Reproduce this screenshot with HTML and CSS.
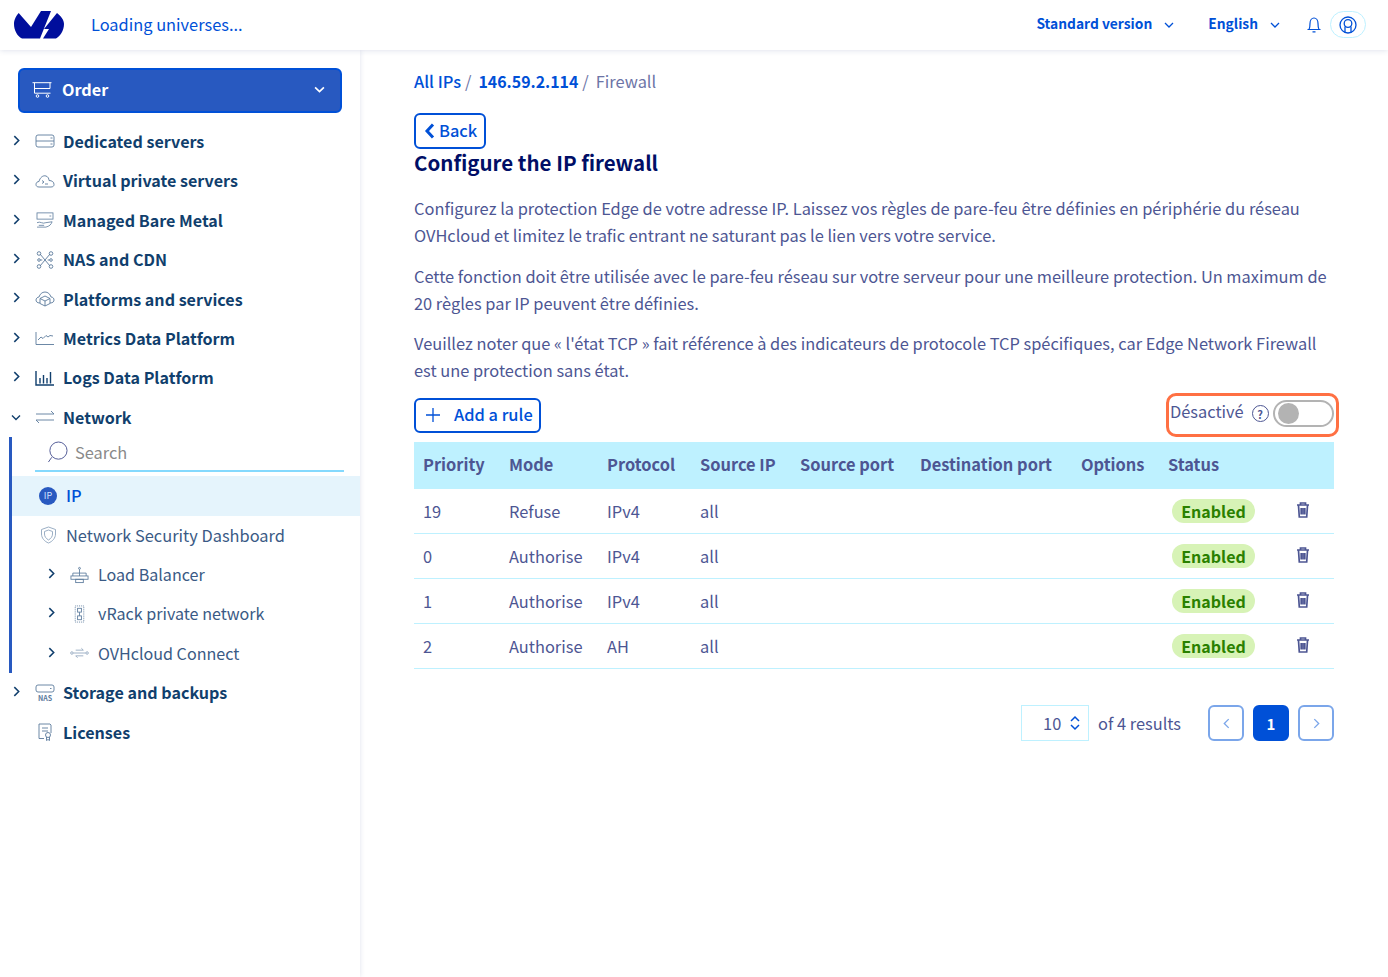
FILE: index.html
```html
<!DOCTYPE html>
<html>
<head>
    <title>Firewall</title>
    <link rel="stylesheet" href="styles.css">
</head>
<body>
    <header class="topbar">
        <svg class="logo" viewBox="0 0 50 28"><path d="M4.700 2C1 6 0 10 0 13 0 19 3 25 8 27.500H26L37 0H27L17 16Z M29 27.500L35 18H30L43 2C47 5 50 9 50 13 50 20 46 25 42 27.500Z"/></svg>
        <span class="loading">Loading universes...</span>
        <div class="topnav">
            <span class="topnav-item">Standard version <svg class="chev-s" viewBox="0 0 10 6"><path d="M1 1l4 4 4-4"/></svg></span>
            <span class="topnav-item lang">English <svg class="chev-s" viewBox="0 0 10 6"><path d="M1 1l4 4 4-4"/></svg></span>
            <svg class="bell" viewBox="0 0 14 16"><path d="M.5 12.500h13M2 12.500c1-1.500 1-3 1-6 0-3 1.700-5.500 4-5.500s4 2.500 4 5.500c0 3 0 4.500 1 6M5.500 14.800h3"/></svg>
            <span class="user"><svg viewBox="0 0 18 18"><circle cx="9" cy="9" r="8"/><circle cx="9" cy="7.500" r="3.800"/><path d="M6 10.500v6M12 10.500v6"/></svg></span>
        </div>
    </header>

    <div class="page">
        <aside class="sidebar">
            <div class="order">
                <svg class="cart" viewBox="0 0 20 16"><path d="M.5.700h19M2.500.700v10.500h16M2.500 6.500h15.500M18 .700v5.800"/><circle cx="5.500" cy="14" r="1.300"/><circle cx="15.500" cy="14" r="1.300"/></svg>
                <span>Order</span>
                <svg class="order-chev" viewBox="0 0 10 6"><path d="M1 1l4 4 4-4"/></svg>
            </div>
            <ul class="menu">
                <li class="row"><svg class="arrow" viewBox="0 0 6 10"><path d="M1 1l4 4-4 4"/></svg><svg class="ico" viewBox="0 0 20 16"><rect x="1" y="2" width="18" height="12" rx="2"/><path d="M1 8h18M15.500 5h2M15.500 11h2"/></svg>Dedicated servers</li>
                <li class="row"><svg class="arrow" viewBox="0 0 6 10"><path d="M1 1l4 4-4 4"/></svg><svg class="ico" viewBox="0 0 20 16"><path d="M4 14C2 14 1 13 1 11.500 1 9.500 2.500 8.500 4 8.500 5 4.500 8 2 11 3c2 .7 3 2.500 3 4.500 3 0 5 1.500 5 4 0 1.500-1 2.500-3 2.500z"/><path d="M7 7.500l2 1.500-2 1.500M10 11h3"/></svg>Virtual private servers</li>
                <li class="row"><svg class="arrow" viewBox="0 0 6 10"><path d="M1 1l4 4-4 4"/></svg><svg class="ico" viewBox="0 0 20 18"><rect x="1" y="1" width="18" height="7"/><path d="M15 4.500h2M1 12c4-2 6 2 10 0l7-1c-1 3-3 5-7 6H1M3 15h6"/></svg>Managed Bare Metal</li>
                <li class="row"><svg class="arrow" viewBox="0 0 6 10"><path d="M1 1l4 4-4 4"/></svg><svg class="ico ico-tall" viewBox="0 0 18 18"><path d="M4 3l10 12M14 3L4 15"/><circle cx="3" cy="2.500" r="1.800"/><circle cx="15" cy="2.500" r="1.800"/><circle cx="3" cy="15.500" r="1.800"/><circle cx="15" cy="15.500" r="1.800"/><circle cx="3" cy="9" r="1.300"/><circle cx="15" cy="9" r="1.300"/><path d="M4.300 9h2M11.700 9h2"/></svg>NAS and CDN</li>
                <li class="row"><svg class="arrow" viewBox="0 0 6 10"><path d="M1 1l4 4-4 4"/></svg><svg class="ico" viewBox="0 0 20 16"><path d="M5 12C2 12 1 10.500 1 9s1.500-3 3-3c1-3 3-5 6-5s5 2 6 5c2 0 3 1.500 3 3s-1 3-4 3"/><path d="M10 5l5 2.500v5L10 15l-5-2.500v-5zM5 7.500L10 10l5-2.500M10 10v5"/></svg>Platforms and services</li>
                <li class="row"><svg class="arrow" viewBox="0 0 6 10"><path d="M1 1l4 4-4 4"/></svg><svg class="ico" viewBox="0 0 20 16"><path d="M1 2v12.500h18M3 10l3-3 2 1.500 3-3 2 1.500 2-1.500 3 .5"/></svg>Metrics Data Platform</li>
                <li class="row"><svg class="arrow" viewBox="0 0 6 10"><path d="M1 1l4 4-4 4"/></svg><svg class="ico ico-dark" viewBox="0 0 20 16"><path d="M1 1v14h18M5 8v5.500M8.500 5v8.500M12 8v5.500M15.500 2v11.500"/></svg>Logs Data Platform</li>
                <li class="row"><svg class="arrow-down" viewBox="0 0 10 6"><path d="M1 1l4 4 4-4"/></svg><svg class="ico" viewBox="0 0 20 16"><path d="M1 5h18l-3-3M19 11H1l3 3"/></svg>Network</li>
            </ul>
            <ul class="submenu">
                <li class="search-row">
                    <svg class="search-ico" viewBox="0 0 22 24"><circle cx="12" cy="10" r="9"/><path d="M5 17l-3.500 5"/></svg>
                    <span>Search</span>
                </li>
                <li class="sub active"><span class="ip-badge">IP</span>IP</li>
                <li class="sub"><svg class="sub-ico shield" viewBox="0 0 18 18"><path d="M9 1l7 2.500V8c0 4-3 7.500-7 9-4-1.500-7-5-7-9V3.500z"/><path d="M9 4l4 1.500V8c0 2.500-1.500 4.500-4 6-2.500-1.500-4-3.500-4-6V5.500z"/></svg>Network Security Dashboard</li>
                <li class="sub nested"><svg class="arrow" viewBox="0 0 6 10"><path d="M1 1l4 4-4 4"/></svg><svg class="sub-ico" viewBox="0 0 20 18"><path d="M10 3v4M3 10V7h14v3M10 7v3"/><circle cx="10" cy="2" r="1"/><rect x="1" y="10" width="18" height="3.500"/><rect x="6" y="13.500" width="8" height="3.500"/></svg>Load Balancer</li>
                <li class="sub nested"><svg class="arrow" viewBox="0 0 6 10"><path d="M1 1l4 4-4 4"/></svg><svg class="sub-ico" viewBox="0 0 20 18"><rect x="5.500" y=".5" width="9" height="17" stroke-dasharray="1 1"/><rect x="8" y="3" width="4" height="4"/><rect x="8" y="11" width="4" height="4"/><path d="M10 7v4"/></svg>vRack private network</li>
                <li class="sub nested"><svg class="arrow" viewBox="0 0 6 10"><path d="M1 1l4 4-4 4"/></svg><svg class="sub-ico connect" viewBox="0 0 20 12"><circle cx="2" cy="6" r="1.300"/><circle cx="18" cy="6" r="1.300"/><path d="M3.500 6h13M6 3h8l-2-2M14 9H6l2 2"/></svg>OVHcloud Connect</li>
            </ul>
            <ul class="menu">
                <li class="row"><svg class="arrow" viewBox="0 0 6 10"><path d="M1 1l4 4-4 4"/></svg><svg class="ico ico-tall" viewBox="0 0 20 18"><rect x="1" y="1" width="18" height="7" rx="2"/><path d="M15 4.500h1.500"/><text x="10" y="17" class="nas">NAS</text></svg>Storage and backups</li>
                <li class="row"><svg class="ico ico-tall" viewBox="0 0 20 18"><path d="M9 15.500H4V1h11l1 1v8"/><path d="M7 5h6M7 8h6"/><circle cx="13" cy="12" r="2.500"/><path d="M11.500 14v3.500l1.500-1 1.500 1V14"/></svg>Licenses</li>
            </ul>
        </aside>

        <main class="content">
            <nav class="crumbs">
                <a>All IPs</a><span class="sep">/</span>
                <a class="ip">146.59.2.114</a><span class="sep">/</span>
                <span class="current">Firewall</span>
            </nav>
            <a class="back"><svg viewBox="0 0 10 16"><path d="M8.500 1.500L2.500 8l6 6.500"/></svg>Back</a>
            <h1>Configure the IP firewall</h1>
            <p>Configurez la protection Edge de votre adresse IP. Laissez vos règles de pare-feu être définies en périphérie du réseau OVHcloud et limitez le trafic entrant ne saturant pas le lien vers votre service.</p>
            <p>Cette fonction doit être utilisée avec le pare-feu réseau sur votre serveur pour une meilleure protection. Un maximum de 20 règles par IP peuvent être définies.</p>
            <p>Veuillez noter que « l'état TCP » fait référence à des indicateurs de protocole TCP spécifiques, car Edge Network Firewall est une protection sans état.</p>

            <div class="actions">
                <a class="add"><svg viewBox="0 0 14 14"><path d="M7 0v14M0 7h14"/></svg>Add a rule</a>
                <div class="toggle-box">
                    <span class="toggle-label">Désactivé</span>
                    <span class="help">?</span>
                    <span class="toggle"><span class="knob"></span></span>
                </div>
            </div>

            <table class="rules">
                <colgroup>
                    <col class="c1"><col class="c2"><col class="c3"><col class="c4"><col class="c5"><col class="c6"><col class="c7"><col class="c8"><col>
                </colgroup>
                <thead>
                    <tr><th>Priority</th><th>Mode</th><th>Protocol</th><th>Source IP</th><th>Source port</th><th>Destination port</th><th>Options</th><th>Status</th><th></th></tr>
                </thead>
                <tbody>
                    <tr><td>19</td><td>Refuse</td><td>IPv4</td><td>all</td><td></td><td></td><td></td><td><span class="badge">Enabled</span></td><td class="del"><svg viewBox="0 0 14 16"><path d="M1 3h12M4.500 3V1h5v2M2.500 3.500l.8 11.500h7.400l.8-11.500M5.200 6v6.500M7 6v6.500M8.800 6v6.500"/></svg></td></tr>
                    <tr><td>0</td><td>Authorise</td><td>IPv4</td><td>all</td><td></td><td></td><td></td><td><span class="badge">Enabled</span></td><td class="del"><svg viewBox="0 0 14 16"><path d="M1 3h12M4.500 3V1h5v2M2.500 3.500l.8 11.500h7.400l.8-11.500M5.200 6v6.500M7 6v6.500M8.800 6v6.500"/></svg></td></tr>
                    <tr><td>1</td><td>Authorise</td><td>IPv4</td><td>all</td><td></td><td></td><td></td><td><span class="badge">Enabled</span></td><td class="del"><svg viewBox="0 0 14 16"><path d="M1 3h12M4.500 3V1h5v2M2.500 3.500l.8 11.500h7.400l.8-11.500M5.200 6v6.500M7 6v6.500M8.800 6v6.500"/></svg></td></tr>
                    <tr><td>2</td><td>Authorise</td><td>AH</td><td>all</td><td></td><td></td><td></td><td><span class="badge">Enabled</span></td><td class="del"><svg viewBox="0 0 14 16"><path d="M1 3h12M4.500 3V1h5v2M2.500 3.500l.8 11.500h7.400l.8-11.500M5.200 6v6.500M7 6v6.500M8.800 6v6.500"/></svg></td></tr>
                </tbody>
            </table>

            <div class="pager">
                <span class="size">10 <svg viewBox="0 0 12 16"><path d="M2 6l4-4 4 4M2 10l4 4 4-4"/></svg></span>
                <span class="results">of 4 results</span>
                <span class="pg"><svg viewBox="0 0 6 10"><path d="M5 1L1 5l4 4"/></svg></span>
                <span class="pg on">1</span>
                <span class="pg"><svg viewBox="0 0 6 10"><path d="M1 1l4 4-4 4"/></svg></span>
            </div>
        </main>
    </div>
</body>
</html>
```

FILE: styles.css
```css
html { overflow: hidden; }
body
{
    margin: 0;
    font-family: "Noto Sans CJK SC", "Noto Sans", sans-serif;
    font-size: 16.4px;
    line-height: 27px;
    color: #4d5693;
    background-color: #fff;
}
ul
{
    list-style: none;
    margin: 0;
    padding: 0;
}
svg
{
    fill: none;
    stroke: currentColor;
    stroke-width: 1;
    flex: none;
}

/* top bar */
.topbar
{
    position: relative;
    z-index: 2;
    display: flex;
    align-items: center;
    height: 50px;
    padding: 0 22px 0 14px;
    background-color: #fff;
    box-shadow: 0 0 6px rgba(40, 60, 130, .18);
}
.logo
{
    width: 50px;
    height: 28px;
    fill: #000e9c;
    stroke: none;
}
.loading
{
    margin-left: 27px;
    padding-bottom: 2px;
    color: #0050d7;
}
.topnav
{
    display: flex;
    align-items: center;
    margin-left: auto;
    padding-bottom: 1px;
    color: #0050d7;
    font-size: 13.8px;
    font-weight: 700;
}
.topnav-item
{
    display: flex;
    align-items: center;
    padding-bottom: 3px;
}
.lang { margin-left: 34px; }
.chev-s
{
    width: 10px;
    height: 6px;
    margin: 3px 0 0 12px;
    stroke-width: 1.3;
}
.bell
{
    width: 14px;
    height: 16px;
    margin-left: 27px;
    stroke-width: 1.200;
}
.user
{
    display: flex;
    align-items: center;
    justify-content: center;
    box-sizing: border-box;
    width: 36px;
    height: 27px;
    margin-left: 9px;
    border: 1px solid #bef1ff;
    border-radius: 14px;
}
.user svg
{
    width: 18px;
    height: 18px;
    stroke-width: 1.300;
}

/* sidebar */
.page
{
    display: flex;
    height: 927px;
}
.sidebar
{
    flex: none;
    width: 360px;
    box-shadow: 0 0 5px rgba(40, 60, 130, .15);
}
.order
{
    display: flex;
    align-items: center;
    height: 45px;
    box-sizing: border-box;
    margin: 18px 18px 8.8px;
    padding: 0 15px 2px 12px;
    border: 2px solid #0050d7;
    border-radius: 6px;
    background-color: #2859c0;
    color: #fff;
    font-size: 16.2px;
    font-weight: 700;
}
.cart
{
    width: 20px;
    height: 16px;
    margin-right: 10px;
}
.order-chev
{
    width: 11px;
    height: 7px;
    margin-left: auto;
    stroke-width: 1.500;
}
.row
{
    position: relative;
    display: flex;
    align-items: center;
    height: 39.4px;
    padding-left: 35px;
    color: #113f6d;
    font-size: 16.1px;
    font-weight: 700;
}
.ico
{
    width: 20px;
    height: 16px;
    margin-right: 8px;
    color: #5b7a9c;
    stroke-width: .9;
}
.ico-tall { height: 18px; }
.ico-dark
{
    color: #113f6d;
    stroke-width: 1.400;
}
.nas
{
    fill: #5b7a9c;
    stroke: none;
    font-size: 7px;
    font-weight: 700;
    text-anchor: middle;
}
.arrow, .arrow-down
{
    position: absolute;
    color: #113f6d;
    stroke-width: 1.400;
}
.arrow
{
    left: 13px;
    top: 13px;
    width: 7px;
    height: 11px;
}
.arrow-down
{
    left: 11px;
    top: 16px;
    width: 10px;
    height: 7px;
}
.submenu
{
    margin-left: 9px;
    border-left: 3px solid #2859c0;
}
.search-row
{
    display: flex;
    align-items: center;
    box-sizing: border-box;
    height: 35px;
    margin: 0 16px 4.2px 23px;
    padding: 0 0 2px 12px;
    border-bottom: 2px solid #85d9fd;
    color: #8a8a8a;
}
.search-ico
{
    width: 21px;
    height: 23px;
    margin-right: 7px;
    color: #4d5693;
}
.sub
{
    position: relative;
    display: flex;
    align-items: center;
    height: 39.4px;
    padding-left: 27px;
    color: #3a5a85;
}
.sub.nested
{
    padding-left: 58px;
    font-size: 16.1px;
}
.nested .arrow
{
    left: 36px;
}
.sub.active
{
    background-color: #e5f4fc;
    color: #0050d7;
    font-weight: 500;
}
.ip-badge
{
    display: flex;
    align-items: center;
    justify-content: center;
    width: 18px;
    height: 18px;
    margin-right: 9px;
    border-radius: 50%;
    background-color: #2859c0;
    color: #cfe0ff;
    font-size: 9px;
    font-weight: 400;
    line-height: 18px;
}
.sub-ico
{
    width: 19px;
    height: 18px;
    margin-right: 9px;
    color: #5b7a9c;
    stroke-width: .9;
}
.shield
{
    margin-right: 8px;
    color: #8fa5bd;
}
.connect { color: #8fa5bd; }

/* main */
.content
{
    flex: 1;
    padding: 18px 54px 0;
}
.crumbs
{
    display: flex;
    align-items: center;
    height: 27px;
    margin-bottom: 18px;
}
.crumbs a
{
    color: #0050d7;
    font-weight: 500;
}
.crumbs .ip { font-weight: 700; font-size: 15.9px; }
.sep
{
    margin: 0 7px 0 4px;
    color: #6c74a6;
}
.current { color: #6c74a6; }
.back
{
    display: inline-flex;
    align-items: center;
    box-sizing: border-box;
    height: 36px;
    padding: 0 7px 2px 8px;
    border: 2px solid #0050d7;
    border-radius: 6px;
    color: #0050d7;
    font-weight: 500;
    vertical-align: top;
}
.back svg
{
    width: 11px;
    height: 16px;
    margin: 2px 4px 0 0;
    stroke-width: 3;
}
h1
{
    margin: 0 0 20px;
    color: #000e66;
    font-size: 20.5px;
    line-height: 26px;
    font-weight: 700;
}
p
{
    margin: 0 0 13.5px;
}
.actions
{
    display: flex;
    align-items: center;
    justify-content: space-between;
    height: 45px;
    margin-top: -5px;
}
.add
{
    display: flex;
    align-items: center;
    box-sizing: border-box;
    height: 35px;
    padding: 0 6px 2px 10px;
    border: 2px solid #0050d7;
    border-radius: 6px;
    color: #0050d7;
    font-weight: 500;
}
.add svg
{
    width: 14px;
    height: 14px;
    margin: 2px 14px 0 0;
    stroke-width: 1.300;
}
.toggle-box
{
    display: flex;
    align-items: center;
    box-sizing: border-box;
    width: 173px;
    height: 44px;
    margin-right: -5px;
    padding: 0 2px 6px 1px;
    border: 3px solid #ff7043;
    border-radius: 10px;
}
.toggle-label { padding-bottom: 2px; }
.help
{
    display: flex;
    align-items: center;
    justify-content: center;
    box-sizing: border-box;
    width: 17px;
    height: 17px;
    margin: 3px 4px 0 8px;
    border: 1.500px solid #4d5693;
    border-radius: 50%;
    font-size: 11px;
    font-weight: 700;
    line-height: 14px;
}
.toggle
{
    display: flex;
    align-items: center;
    box-sizing: border-box;
    width: 61px;
    height: 27px;
    margin-top: 2px;
    padding-left: 3px;
    border: 2.500px solid #b3b3b3;
    border-radius: 14px;
}
.knob
{
    width: 21px;
    height: 21px;
    border-radius: 50%;
    background-color: #b3b3b3;
}

/* table */
.rules
{
    width: 920px;
    margin-top: 4px;
    table-layout: fixed;
    border-collapse: collapse;
}
.c1 { width: 86px; }
.c2 { width: 98px; }
.c3 { width: 93px; }
.c4 { width: 100px; }
.c5 { width: 120px; }
.c6 { width: 161px; }
.c7 { width: 87px; }
.c8 { width: 121px; }
.rules th
{
    height: 47px;
    padding: 0 0 2px 9px;
    box-sizing: border-box;
    background-color: #bef1ff;
    text-align: left;
    font-size: 16.4px;
    font-weight: 700;
    white-space: nowrap;
}
.rules td
{
    height: 45px;
    box-sizing: border-box;
    padding: 0 0 0 9px;
    border-bottom: 1px solid #bef1ff;
}
.rules tr:first-child td { padding-top: 1px; }
.badge
{
    display: block;
    width: 83px;
    height: 24px;
    margin-left: 4px;
    border-radius: 12px;
    background-color: #d7f3b6;
    color: #2a8000;
    font-size: 16px;
    font-weight: 700;
    line-height: 24px;
    text-align: center;
}
.rules .del
{
    padding: 0 0 2px 16px;
}
.del svg
{
    display: block;
    width: 14px;
    height: 16px;
    color: #4d5693;
    stroke-width: 1.700;
}

/* pager */
.pager
{
    display: flex;
    align-items: center;
    justify-content: flex-end;
    margin-top: 36px;
}
.size
{
    display: flex;
    align-items: center;
    box-sizing: border-box;
    width: 68px;
    height: 36px;
    padding-left: 21px;
    border: 1px solid #bef1ff;
}
.size svg
{
    width: 12px;
    height: 16px;
    margin-left: 8px;
    color: #0050d7;
    stroke-width: 1.500;
}
.results { margin: 1px 27px 0 9px; }
.pg
{
    display: flex;
    align-items: center;
    justify-content: center;
    box-sizing: border-box;
    width: 36px;
    height: 36px;
    margin-left: 9px;
    border: 2px solid #7ba6ea;
    border-radius: 6px;
    color: #7ba6ea;
}
.results + .pg { margin-left: 0; }
.pg svg
{
    width: 7px;
    height: 11px;
    stroke-width: 1.200;
}
.pg.on
{
    border-color: #0050d7;
    background-color: #0050d7;
    color: #fff;
    font-weight: 700;
    font-size: 15px;
}
```
